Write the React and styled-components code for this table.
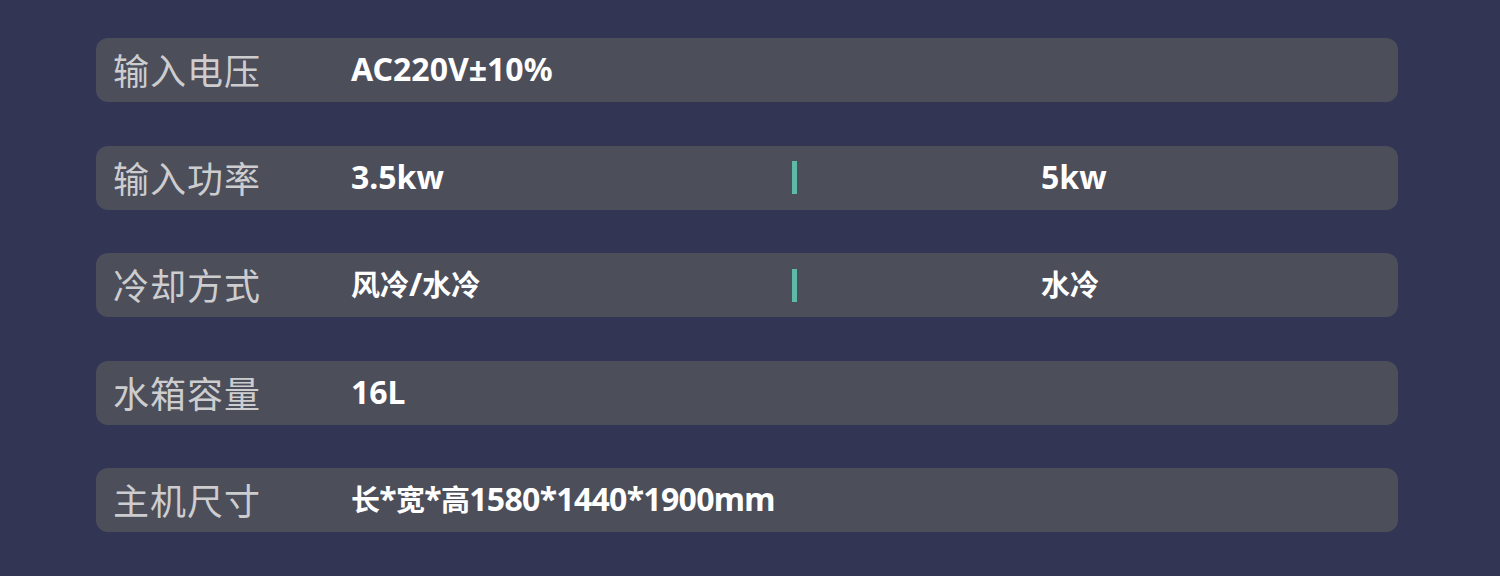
import React from 'react';
import styled, { createGlobalStyle } from 'styled-components';

const GlobalStyle = createGlobalStyle`
  html, body {
    margin: 0;
    padding: 0;
    background: #323654;
    overflow: hidden;
  }
`;

const Page = styled.div`
  width: 1500px;
  height: 576px;
  overflow: hidden;
  padding: 38px 0 0 96px;
  box-sizing: border-box;
  font-family: "Noto Sans CJK SC", "Noto Sans", sans-serif;
`;

const List = styled.div`
  display: flex;
  flex-direction: column;
  gap: 43.5px;
  width: 1302px;
`;

const Row = styled.div`
  display: flex;
  align-items: center;
  box-sizing: border-box;
  height: 64px;
  flex-shrink: 0;
  padding: 0 0 2px 17px;
  border-radius: 12px;
  background: #4c4e5a;
`;

const Label = styled.div`
  width: 238px;
  flex-shrink: 0;
  font-size: 36px;
  letter-spacing: 1px;
  color: #cdcdcf;
  line-height: 1;
`;

const Value = styled.div`
  width: ${p => (p.$half ? '441px' : 'auto')};
  flex-shrink: 0;
  font-family: "Noto Sans", "Noto Sans CJK SC", sans-serif;
  font-size: 32px;
  font-weight: 700;
  color: #ffffff;
  line-height: 1;
  white-space: nowrap;
  letter-spacing: ${p => (p.$tight ? '-0.7px' : '0')};
`;

const Han = styled.span`
  font-family: "Noto Sans CJK SC", sans-serif;
  font-size: 29px;
`;

const Divider = styled.div`
  width: 5px;
  height: 33px;
  margin: 2px 244px 0 0;
  background: #5fb9a9;
  flex-shrink: 0;
`;

// split text into CJK and latin runs so CJK glyphs get a smaller size
const renderText = text =>
  text.split(/([\u4e00-\u9fff]+)/).map((part, i) =>
    /[\u4e00-\u9fff]/.test(part) ? <Han key={i}>{part}</Han> : part
  );

const specs = [
  { label: '输入电压', values: ['AC220V±10%'] },
  { label: '输入功率', values: ['3.5kw', '5kw'] },
  { label: '冷却方式', values: ['风冷/水冷', '水冷'] },
  { label: '水箱容量', values: ['16L'] },
  { label: '主机尺寸', values: ['长*宽*高1580*1440*1900mm'], tight: true },
  { label: '', values: [''] },
];

export default function App() {
  return (
    <Page>
      <GlobalStyle />
      <List>
        {specs.map((s, i) => (
          <Row key={i}>
            <Label>{s.label}</Label>
            {s.values.length > 1 ? (
              <>
                <Value $half>{renderText(s.values[0])}</Value>
                <Divider />
                <Value>{renderText(s.values[1])}</Value>
              </>
            ) : (
              <Value $tight={s.tight}>{renderText(s.values[0])}</Value>
            )}
          </Row>
        ))}
      </List>
    </Page>
  );
}
